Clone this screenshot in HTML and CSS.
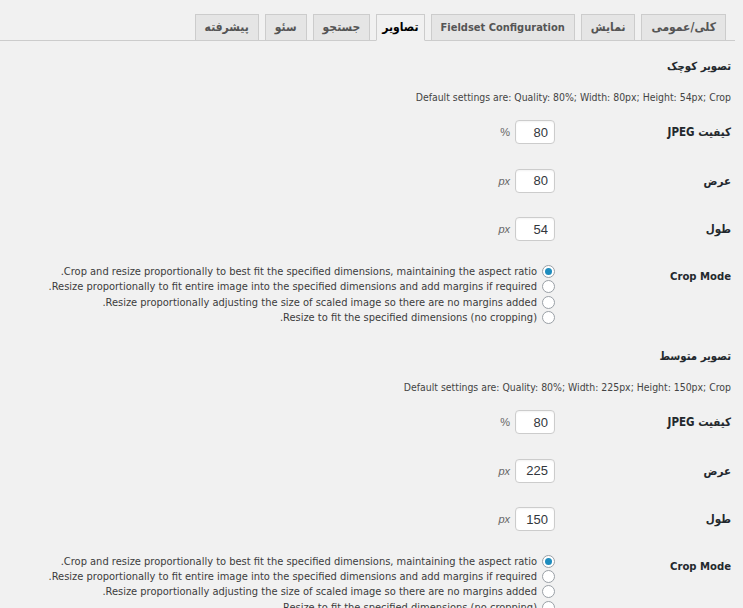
FILE: index.html
```html
<!DOCTYPE html>
<html lang="fa" dir="rtl">
<head>
<meta charset="utf-8">
<title>تنظیمات تصاویر</title>
<link rel="stylesheet" href="styles.css">
</head>
<body>
<div class="wrap">
  <nav class="tabs">
    <a class="tab">کلی/عمومی</a>
    <a class="tab">نمایش</a>
    <a class="tab latin">Fieldset Configuration</a>
    <a class="tab active">تصاویر</a>
    <a class="tab">جستجو</a>
    <a class="tab">سئو</a>
    <a class="tab">پیشرفته</a>
  </nav>

  <section class="group">
    <h3 class="group-title">تصویر کوچک</h3>
    <p class="desc">Default settings are: Quality: 80%; Width: 80px; Height: 54px; Crop</p>
    <div class="form">
      <div class="row">
        <div class="label">کیفیت JPEG</div>
        <div class="field"><input class="num" type="text" value="80"><span class="unit">%</span></div>
      </div>
      <div class="row">
        <div class="label">عرض</div>
        <div class="field"><input class="num" type="text" value="80"><span class="unit px">px</span></div>
      </div>
      <div class="row">
        <div class="label">طول</div>
        <div class="field"><input class="num" type="text" value="54"><span class="unit px">px</span></div>
      </div>
      <div class="row radio-row">
        <div class="label crop">Crop Mode</div>
        <div class="options">
          <label class="opt"><input class="radio" type="radio" name="c1" checked><span>Crop and resize proportionally to best fit the specified dimensions, maintaining the aspect ratio.</span></label>
          <label class="opt"><input class="radio" type="radio" name="c1"><span>Resize proportionally to fit entire image into the specified dimensions and add margins if required.</span></label>
          <label class="opt"><input class="radio" type="radio" name="c1"><span>Resize proportionally adjusting the size of scaled image so there are no margins added.</span></label>
          <label class="opt"><input class="radio" type="radio" name="c1"><span>Resize to fit the specified dimensions (no cropping).</span></label>
        </div>
      </div>
    </div>
  </section>

  <section class="group second">
    <h3 class="group-title">تصویر متوسط</h3>
    <p class="desc">Default settings are: Quality: 80%; Width: 225px; Height: 150px; Crop</p>
    <div class="form">
      <div class="row">
        <div class="label">کیفیت JPEG</div>
        <div class="field"><input class="num" type="text" value="80"><span class="unit">%</span></div>
      </div>
      <div class="row">
        <div class="label">عرض</div>
        <div class="field"><input class="num" type="text" value="225"><span class="unit px">px</span></div>
      </div>
      <div class="row">
        <div class="label">طول</div>
        <div class="field"><input class="num" type="text" value="150"><span class="unit px">px</span></div>
      </div>
      <div class="row radio-row">
        <div class="label crop">Crop Mode</div>
        <div class="options">
          <label class="opt"><input class="radio" type="radio" name="c2" checked><span>Crop and resize proportionally to best fit the specified dimensions, maintaining the aspect ratio.</span></label>
          <label class="opt"><input class="radio" type="radio" name="c2"><span>Resize proportionally to fit entire image into the specified dimensions and add margins if required.</span></label>
          <label class="opt"><input class="radio" type="radio" name="c2"><span>Resize proportionally adjusting the size of scaled image so there are no margins added.</span></label>
          <label class="opt"><input class="radio" type="radio" name="c2"><span>Resize to fit the specified dimensions (no cropping).</span></label>
        </div>
      </div>
    </div>
  </section>
</div>
</body>
</html>
```

FILE: styles.css
```css
html, body {
  margin: 0;
  padding: 0;
  background: #f1f1f1;
}

body {
  font-family: "DejaVu Sans", "Liberation Sans", sans-serif;
  font-size: 12px;
  color: #444;
  overflow: hidden;
}

.wrap {
  margin-right: 8px;
}

.tabs {
  display: flex;
  gap: 6px;
  padding: 14px 9px 0 0;
  border-bottom: 1px solid #ccc;
  height: 26px;
}

.tab {
  display: block;
  box-sizing: border-box;
  height: 27px;
  padding: 0 9px;
  line-height: 25px;
  border: 1px solid #ccc;
  background: #e5e5e5;
  color: #555;
  font-weight: bold;
  font-size: 12px;
  font-stretch: condensed;
  white-space: nowrap;
}

.tab.latin {
  font-size: 11px;
}

.tab.active {
  padding: 0 5px;
  background: #f1f1f1;
  border-bottom-color: #f1f1f1;
  color: #000;
}

.group {
  padding-right: 4px;
}

.group-title {
  margin: 16px 0 0;
  font-size: 11.3px;
  font-stretch: condensed;
  line-height: 20px;
  font-weight: bold;
  color: #23282d;
}

.second .group-title {
  margin-top: 22px;
}

.desc {
  margin: 12px 0 3px;
  font-size: 10.4px;
  font-stretch: condensed;
  line-height: 16px;
  color: #444;
}

.row {
  display: grid;
  grid-template-columns: 176px 1fr;
  align-items: center;
  height: 48.6px;
}

.label {
  font-weight: bold;
  font-size: 11.5px;
  font-stretch: condensed;
  color: #23282d;
}

.field {
  display: flex;
  align-items: center;
  gap: 5px;
}

.num {
  box-sizing: border-box;
  width: 40px;
  height: 24px;
  margin: 0;
  padding: 0 6px;
  border: 1px solid #ccc;
  border-radius: 4px;
  background: #fff;
  font-family: "Liberation Sans", sans-serif;
  font-size: 13px;
  color: #32373c;
  text-align: right;
  box-shadow: inset 0 1px 2px rgba(0,0,0,0.05);
}

.unit {
  font-family: "Liberation Sans", sans-serif;
  font-size: 11px;
  color: #666;
}

.unit.px {
  font-style: italic;
}

.radio-row {
  height: auto;
  align-items: start;
  padding-top: 10px;
}

.label.crop {
  font-size: 11.2px;
  padding-top: 6px;
}

.options {
  display: flex;
  flex-direction: column;
}

.opt {
  display: flex;
  align-items: center;
  gap: 5px;
  height: 15.3px;
  font-size: 11px;
  font-stretch: condensed;
  color: #3c3c3c;
  white-space: nowrap;
}

.radio {
  appearance: none;
  -webkit-appearance: none;
  box-sizing: border-box;
  width: 13px;
  height: 13px;
  margin: 0;
  border: 1px solid #9aa0a6;
  border-radius: 50%;
  background: #fff;
  display: grid;
  place-items: center;
  flex: none;
}

.radio:checked::before {
  content: "";
  width: 7px;
  height: 7px;
  border-radius: 50%;
  background: #1e8cbe;
}
```
